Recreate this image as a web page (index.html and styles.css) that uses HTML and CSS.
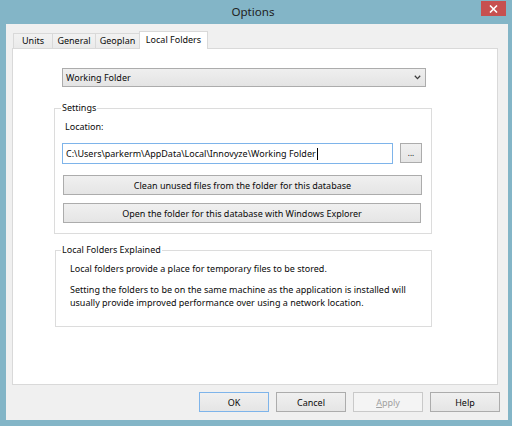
FILE: index.html
```html
<!DOCTYPE html>
<html>
<head>
<meta charset="utf-8">
<title>Options</title>
<link rel="stylesheet" href="styles.css">
</head>
<body>
<div class="window">
  <div class="titlebar">
    <div class="title">Options</div>
    <div class="close">
      <svg width="9" height="8" viewBox="0 0 9 8"><path d="M1 0.5 L8 7.5 M8 0.5 L1 7.5" stroke="#fff" stroke-width="1.6" fill="none"/></svg>
    </div>
  </div>
  <div class="client">
    <div class="tabs">
      <div class="tab t-units">Units</div>
      <div class="tab t-general">General</div>
      <div class="tab t-geoplan">Geoplan</div>
      <div class="tab t-local active">Local Folders</div>
    </div>
    <div class="panel">
      <div class="select">
        <span>Working Folder</span>
        <svg class="chevron" width="7" height="5" viewBox="0 0 7 5"><path d="M0.8 0.8 L3.5 3.6 L6.2 0.8" stroke="#3c3c3c" stroke-width="1.3" fill="none"/></svg>
      </div>
      <fieldset class="group settings">
        <legend>Settings</legend>
        <div class="label">Location:</div>
        <div class="path-row">
          <div class="input">C:\Users\parkerm\AppData\Local\Innovyze\Working Folder<span class="caret"></span></div>
          <div class="btn browse">...</div>
        </div>
        <div class="btn wide clean">Clean unused files from the folder for this database</div>
        <div class="btn wide open">Open the folder for this database with Windows Explorer</div>
      </fieldset>
      <fieldset class="group explained">
        <legend>Local Folders Explained</legend>
        <p class="p1">Local folders provide a place for temporary files to be stored.</p>
        <p class="p2">Setting the folders to be on the same machine as the application is installed will usually provide improved performance over using a network location.</p>
      </fieldset>
    </div>
    <div class="footer">
      <div class="btn dlg default">OK</div>
      <div class="btn dlg">Cancel</div>
      <div class="btn dlg disabled"><span class="u">A</span>pply</div>
      <div class="btn dlg">Help</div>
    </div>
  </div>
</div>
</body>
</html>
```
FILE: styles.css
```css
* { box-sizing: border-box; }
html, body { margin: 0; padding: 0; }
body {
  width: 512px;
  height: 426px;
  overflow: hidden;
  font-family: "Noto Sans", "Open Sans", sans-serif;
  font-size: 9px;
  color: #0a0a0a;
}
.window {
  width: 512px;
  height: 426px;
  background: #83b5c7;
  padding: 0 4px 6px 6px;
  display: flex;
  flex-direction: column;
}
.titlebar {
  height: 24px;
  margin: 0 -4px 0 -6px;
  padding-right: 6px;
  display: grid;
  grid-template-columns: 1fr auto 1fr;
  align-items: start;
}
.title {
  grid-column: 2;
  line-height: 24px;
  font-size: 11.6px;
  color: #222;
}
.close {
  grid-column: 3;
  justify-self: end;
  margin-top: 1px;
  width: 25px;
  height: 15px;
  background: #c75050;
  display: flex;
  align-items: center;
  justify-content: center;
}
.client {
  flex: 1;
  background: #f0f0f0;
  padding: 7px 10px 0 6px;
  display: flex;
  flex-direction: column;
}
.tabs {
  height: 17px;
  display: flex;
  align-items: flex-end;
  padding-left: 1px;
}
.tab {
  height: 15px;
  border: 1px solid #d9d9d9;
  border-bottom: none;
  margin-right: -1px;
  background: linear-gradient(#f2f2f2, #eaeaea);
  text-align: center;
  line-height: 14px;
}
.t-units { width: 40px; }
.t-general { width: 44px; }
.t-geoplan { width: 45px; }
.t-local { width: 69px; }
.tab.active {
  height: 18px;
  margin-bottom: -1px;
  background: #fff;
  position: relative;
  z-index: 1;
  line-height: 15px;
}
.panel {
  height: 337px;
  background: #fff;
  border: 1px solid #d9d9d9;
  padding: 19px 0 0 41px;
}
.select {
  margin-left: 8px;
  width: 364px;
  height: 19px;
  border: 1px solid #acacac;
  background: linear-gradient(#efefef, #e4e4e4);
  display: flex;
  align-items: center;
  justify-content: space-between;
  padding: 0 4px 0 3px;
}
.chevron { display: block; }
.group {
  margin: 0;
  padding: 0;
  border: 1px solid #dcdcdc;
  min-width: 0;
}
.group legend {
  padding: 0 1px;
  line-height: 12px;
}
.settings {
  width: 378px;
  margin-top: 15px;
  padding-bottom: 10px;
}
.settings legend { margin-left: 6px; }
.label {
  margin: 7px 0 0 10px;
  line-height: 12px;
}
.path-row {
  display: flex;
  gap: 7px;
  margin: 10px 0 0 7px;
}
.input {
  width: 331px;
  height: 21px;
  border: 1px solid #7eb4ea;
  background: #fff;
  padding-left: 3px;
  display: flex;
  align-items: center;
  white-space: nowrap;
}
.caret {
  display: inline-block;
  width: 1px;
  height: 12px;
  background: #000;
  margin-left: 1px;
}
.btn {
  border: 1px solid #acacac;
  background: linear-gradient(#f0f0f0, #e5e5e5);
  display: flex;
  align-items: center;
  justify-content: center;
  white-space: nowrap;
}
.browse {
  width: 22px;
  height: 20px;
  font-size: 8px;
  padding-bottom: 2px;
}
.wide {
  margin-left: 8px;
  height: 20px;
}
.clean { width: 359px; margin-top: 11px; }
.open { width: 358px; margin-top: 8px; }
.explained {
  width: 377px;
  margin: 10px 0 0 1px;
  padding: 0 0 17px 14px;
}
.explained legend { margin-left: -9px; }
.explained p { margin: 0; }
.p1 { margin-top: 7px !important; line-height: 12px; }
.p2 { margin-top: 7.5px !important; line-height: 13px; width: 350px; }
.footer {
  display: flex;
  justify-content: flex-end;
  gap: 7px;
  margin: 7px -2px 0 0;
}
.dlg {
  width: 70px;
  height: 20px;
}
.default { border-color: #7eb4ea; }
.disabled {
  border-color: #c9c9c9;
  background: #f4f4f4;
  color: #a0a0a0;
}
.u { text-decoration: underline; }
```
